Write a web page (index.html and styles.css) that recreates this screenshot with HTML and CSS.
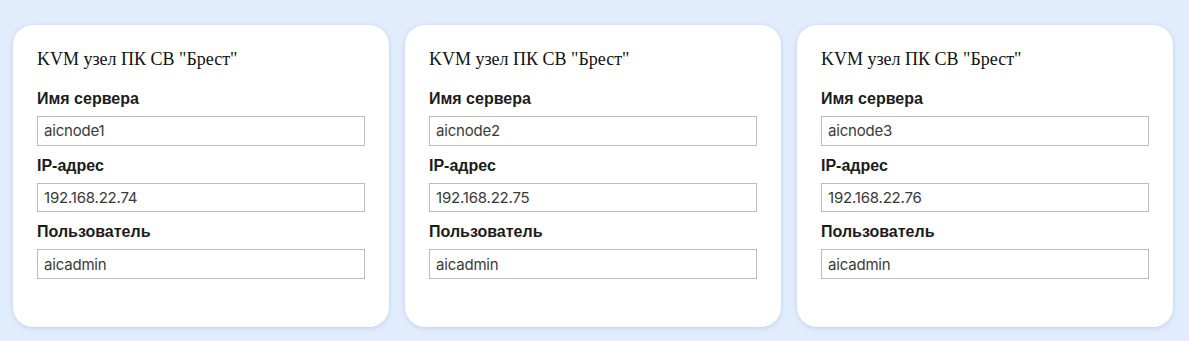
FILE: index.html
```html
<!DOCTYPE html>
<html lang="ru">
<head>
  <meta charset="UTF-8">
  <title>KVM узлы</title>
  <meta name="viewport" content="width=device-width, initial-scale=1">
  <link rel="stylesheet" href="styles.css">
</head>
<body>
  <div class="nodes">
    <div class="node-card">
      <h3 class="node-title">KVM узел ПК СВ "Брест"</h3>
      <label class="field-label">Имя сервера</label>
      <input class="field-input" type="text" value="aicnode1">
      <label class="field-label">IP-адрес</label>
      <input class="field-input" type="text" value="192.168.22.74">
      <label class="field-label">Пользователь</label>
      <input class="field-input" type="text" value="aicadmin">
    </div>
    <div class="node-card">
      <h3 class="node-title">KVM узел ПК СВ "Брест"</h3>
      <label class="field-label">Имя сервера</label>
      <input class="field-input" type="text" value="aicnode2">
      <label class="field-label">IP-адрес</label>
      <input class="field-input" type="text" value="192.168.22.75">
      <label class="field-label">Пользователь</label>
      <input class="field-input" type="text" value="aicadmin">
    </div>
    <div class="node-card">
      <h3 class="node-title">KVM узел ПК СВ "Брест"</h3>
      <label class="field-label">Имя сервера</label>
      <input class="field-input" type="text" value="aicnode3">
      <label class="field-label">IP-адрес</label>
      <input class="field-input" type="text" value="192.168.22.76">
      <label class="field-label">Пользователь</label>
      <input class="field-input" type="text" value="aicadmin">
    </div>
  </div>
</body>
</html>
```

FILE: styles.css
```css
:root {
  --page-bg: #e1ecfd;
  --card-bg: #ffffff;
  --text: #1a1a1a;
  --input-border: #bdbdbd;
  --radius: 20px;
}
html, body {
  margin: 0;
  padding: 0;
  background: var(--page-bg);
  color: var(--text);
  font-family: 'Liberation Sans', Arial, sans-serif;
}
body {
  padding: 25px 13px;
  box-sizing: border-box;
}

.nodes {
  display: grid;
  grid-template-columns: repeat(3, 376px);
  gap: 16px;
}

.node-card {
  background: var(--card-bg);
  border-radius: var(--radius);
  box-shadow: 0 1px 4px rgba(120, 150, 200, 0.35);
  padding: 24px 24px 48px 24px;
  display: flex;
  flex-direction: column;
  box-sizing: border-box;
  height: 302px;
}

.node-title {
  font-family: 'Liberation Serif', 'Times New Roman', serif;
  font-weight: 400;
  font-size: 18px;
  line-height: 21px;
  margin: 0 0 9px 0;
  color: #111;
}

.field-label {
  font-weight: 700;
  font-size: 16px;
  line-height: 19px;
  margin: 10px 0 8px 0;
  color: #1c1c1c;
}

.field-input {
  font-family: Inter, 'Open Sans', sans-serif;
  font-size: 15px;
  letter-spacing: -0.2px;
  color: #3a3a3a;
  height: 30px;
  padding: 0 6px;
  border: 1px solid var(--input-border);
  border-radius: 0;
  box-sizing: border-box;
  width: 100%;
  outline: none;
}
```
